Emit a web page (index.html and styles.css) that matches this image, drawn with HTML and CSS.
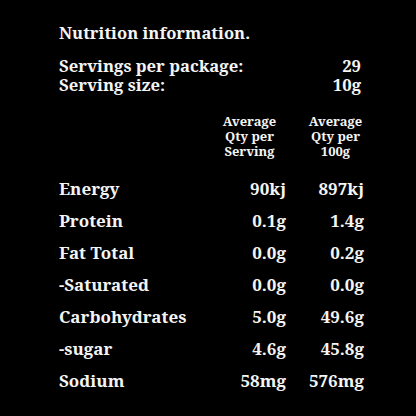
FILE: index.html
```html
<!DOCTYPE html>
<html lang="en">
<head>
    <meta charset="UTF-8">
    <title>Nutrition information</title>
    <link rel="stylesheet" href="styles.css">
</head>
<body>
    <div class="panel">
        <h1>Nutrition information.</h1>
        <div class="servings">
            <div class="line"><span>Servings per package:</span><span>29</span></div>
            <div class="line"><span>Serving size:</span><span>10g</span></div>
        </div>
        <div class="facts">
            <div class="head"></div>
            <div class="head col1">Average<br>Qty per<br>Serving</div>
            <div class="head col2">Average<br>Qty per<br>100g</div>

            <div class="name">Energy</div><div class="num">90kj</div><div class="num">897kj</div>
            <div class="name">Protein</div><div class="num">0.1g</div><div class="num">1.4g</div>
            <div class="name">Fat Total</div><div class="num">0.0g</div><div class="num">0.2g</div>
            <div class="name">-Saturated</div><div class="num">0.0g</div><div class="num">0.0g</div>
            <div class="name">Carbohydrates</div><div class="num">5.0g</div><div class="num">49.6g</div>
            <div class="name">-sugar</div><div class="num">4.6g</div><div class="num">45.8g</div>
            <div class="name">Sodium</div><div class="num">58mg</div><div class="num">576mg</div>
        </div>
    </div>
</body>
</html>
```

FILE: styles.css
```css
body {
    margin: 0;
    background-color: #000;
    color: #f4f4f4;
    font-family: "Noto Serif", "DejaVu Serif", serif;
    font-weight: bold;
}
.panel {
    width: 305px;
    padding: 22px 0 0 59px;
}
h1 {
    font-size: 16.6px;
    line-height: 22px;
    margin: 0 0 12px;
}
.servings {
    font-size: 16.7px;
    line-height: 19px;
}
.line {
    display: flex;
    justify-content: space-between;
    padding-right: 3px;
}
.facts {
    display: grid;
    grid-template-columns: 1fr 86px 78px;
    margin-top: 20px;
    font-size: 17px;
}
.head {
    font-size: 13px;
    line-height: 15px;
    text-align: center;
    margin-bottom: 18px;
}
.head.col1 {
    padding-left: 13px;
}
.head.col2 {
    padding-left: 21px;
}
.name, .num {
    height: 32px;
}
.num {
    text-align: right;
}
```
